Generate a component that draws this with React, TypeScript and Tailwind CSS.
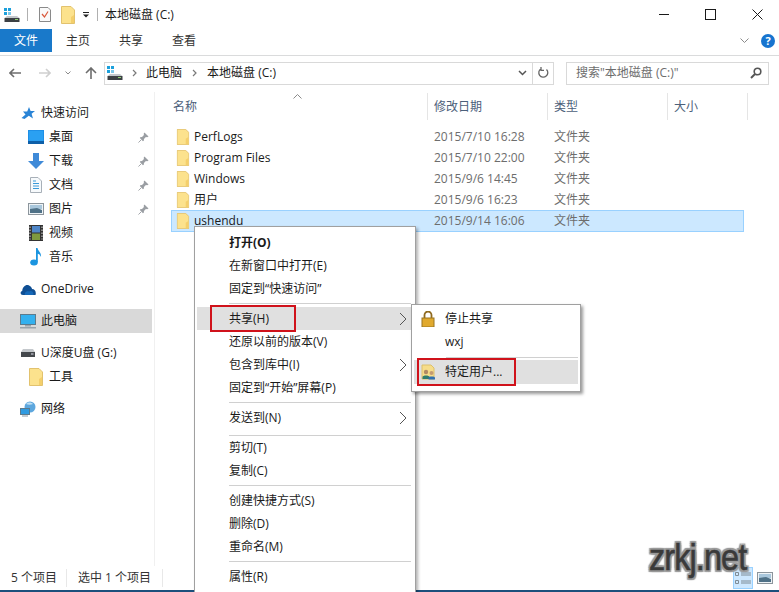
import { ReactNode } from 'react'

const FONT = `font-['Open_Sans','Noto_Sans_CJK_SC',sans-serif]`

const Folder = ({ className = '' }: { className?: string }) => (
	<svg viewBox="0 0 14 18" className={`w-[14px] h-[18px] shrink-0 ${className}`}>
		<path d="M0.5 0.5H10L13.5 4V17.5H0.5Z" fill="#fce28d" stroke="#e2c26e" />
		<path d="M10 17V11L13 9V17Z" fill="#f4cf6b" />
	</svg>
)

const Drive = () => (
	<svg viewBox="0 0 16 14" className="w-4 h-[14px] shrink-0">
		<rect x="0" y="0" width="3" height="3" fill="#1ca0dc" />
		<rect x="4" y="0" width="3" height="3" fill="#1ca0dc" />
		<rect x="0" y="4" width="3" height="3" fill="#1ca0dc" />
		<rect x="4" y="4" width="3" height="3" fill="#7cc8ea" />
		<path d="M3 8H13L15.5 10H0.5Z" fill="#c4c8cc" />
		<rect x="0.5" y="10" width="15" height="4" fill="#3c4044" />
		<rect x="11" y="11" width="3" height="1" fill="#8fd16f" />
	</svg>
)

const Pin = () => (
	<svg viewBox="0 0 12 12" className="w-[11px] h-[11px]">
		<path d="M7 0.5L11.5 5L10 5.8L8.6 5.5L6.5 7.6L6.3 9.6L5.4 10L2 6.6L2.4 5.7L4.4 5.5L6.5 3.4L6.2 2Z" fill="#9a9ea3" />
		<path d="M3.5 8.5L0.5 11.5" stroke="#9a9ea3" />
	</svg>
)

const NavIcon = ({ name }: { name: string }) => {
	if (name === 'star')
		return (
			<svg viewBox="0 0 14 14" className="w-[14px] h-[14px]">
				<path d="M8 1L9.6 5H14L10.6 7.8L12 12.5L7.8 9.8L3.5 13L0.5 12L4.5 8.5L2 5.5H6.2Z" fill="#2a84d6" />
			</svg>
		)
	if (name === 'desktop')
		return (
			<svg viewBox="0 0 16 14" className="w-4 h-[14px]">
				<rect width="16" height="14" fill="#1e8fe6" />
				<rect x="0" y="11" width="16" height="3" fill="#0d5fa8" />
				<rect x="1" y="1" width="14" height="10" fill="#2aa0f2" />
			</svg>
		)
	if (name === 'download')
		return (
			<svg viewBox="0 0 16 16" className="w-4 h-4">
				<path d="M5 0H11V8H16L8 16L0 8H5Z" fill="#3f8ad8" />
			</svg>
		)
	if (name === 'doc')
		return (
			<svg viewBox="0 0 12 16" className="w-3 h-4">
				<path d="M0.5 0.5H8L11.5 4V15.5H0.5Z" fill="#f7fafc" stroke="#a8b0b8" />
				<path d="M3 4H6M3 6.5H9M3 9H9M3 11.5H9" stroke="#3a9ad9" />
			</svg>
		)
	if (name === 'picture')
		return (
			<svg viewBox="0 0 16 12" className="w-4 h-3">
				<rect x="0.5" y="0.5" width="15" height="11" fill="#eef3f6" stroke="#8c959c" />
				<rect x="2" y="2" width="12" height="4" fill="#a9c7dc" />
				<path d="M2 6L9 5L14 7V10H2Z" fill="#4f7187" />
			</svg>
		)
	if (name === 'video')
		return (
			<svg viewBox="0 0 14 16" className="w-[14px] h-4">
				<rect width="14" height="16" fill="#333" />
				<rect x="3" y="1" width="8" height="6.5" fill="#4f86c8" />
				<rect x="3" y="8.5" width="8" height="6.5" fill="#7f9a3f" />
				<path d="M1 1.5V14.5M13 1.5V14.5" stroke="#ddd" strokeDasharray="1.5 1.5" />
			</svg>
		)
	if (name === 'music')
		return (
			<svg viewBox="0 0 12 18" className="w-3 h-[18px]">
				<ellipse cx="4" cy="14.5" rx="3.8" ry="3" fill="#1b95e0" />
				<path d="M6 14V0H7.5C8 3 11.5 4.5 11 9C10 6.5 8.8 6 7.8 5.8V14Z" fill="#1b95e0" />
			</svg>
		)
	if (name === 'cloud')
		return (
			<svg viewBox="0 0 16 11" className="w-4 h-[11px]">
				<path d="M3 11C0 11 0 7.5 2.2 7C2.5 3 6 0 9 1.5C11 2.2 12 4 12 5C15 5 16.5 8 15.5 11Z" fill="#0f4f94" />
				<path d="M5 11C4 8.5 7 6.5 9 7.5C11 6 14 7.5 13.5 11Z" fill="#1568b8" />
			</svg>
		)
	if (name === 'pc')
		return (
			<svg viewBox="0 0 16 15" className="w-4 h-[15px]">
				<rect x="0.5" y="0.5" width="15" height="10" fill="#33b0ee" stroke="#5c7a8c" />
				<rect x="5" y="11" width="6" height="1.5" fill="#9aa4ab" />
				<rect x="0" y="13" width="16" height="1.5" fill="#9aa4ab" />
			</svg>
		)
	if (name === 'usb')
		return (
			<svg viewBox="0 0 14 8" className="w-[14px] h-2">
				<path d="M2 0H12L14 3H0Z" fill="#c4c8cc" />
				<rect x="0" y="3" width="14" height="5" fill="#44484c" />
				<rect x="10" y="4.5" width="2.5" height="1" fill="#dde" />
			</svg>
		)
	if (name === 'folder') return <Folder />
	return (
		<svg viewBox="0 0 16 16" className="w-4 h-4">
			<circle cx="10" cy="6" r="5.5" fill="#5da7de" />
			<path d="M6 3C8 1 11 1 13 3C11 4 8 4 6 3Z" fill="#bfe0f5" />
			<rect x="0.5" y="7.5" width="9" height="6" fill="#2f9ae0" stroke="#5c7a8c" />
			<rect x="2" y="14.5" width="6" height="1" fill="#8a9aa6" />
		</svg>
	)
}

const NavRow = ({
	icon,
	label,
	sub,
	pin,
	active,
}: {
	icon: string
	label: string
	sub?: boolean
	pin?: boolean
	active?: boolean
}) => (
	<div
		className={`flex items-center h-6 w-[152px] text-[12px] text-[#1a1a1a] ${
			sub ? 'pl-[28px]' : 'pl-[20px]'
		} ${active ? 'bg-[#d9d9d9]' : ''}`}
	>
		<span className="flex justify-center shrink-0 w-4 mr-[5px]">
			<NavIcon name={icon} />
		</span>
		<span className="flex-1 whitespace-nowrap">{label}</span>
		{pin && (
			<span className="mr-[3px] flex">
				<Pin />
			</span>
		)}
	</div>
)

const Column = ({ label, width }: { label: string; width: string }) => (
	<div className={`${width} h-[27px] pl-[6px] flex items-center text-[12px] text-[#4c607a] border-r border-[#e5e5e5]`}>
		{label}
	</div>
)

const FileRow = ({ name, date, selected }: { name: string; date: string; selected?: boolean }) => (
	<div
		className={`flex items-center w-[573px] text-[12px] border ${
			selected ? 'h-[22px] pb-[1px] bg-[#cce8ff] border-[#99d1ff]' : 'h-[21px] border-transparent'
		}`}
	>
		<span className="w-[22px] pl-[4px] flex">
			<Folder className="scale-[0.9]" />
		</span>
		<span className="w-[240px] text-[#1a1a1a]">{name}</span>
		<span className="w-[120px] text-[#6d6d6d]">{date}</span>
		<span className="text-[#6d6d6d]">文件夹</span>
	</div>
)

const Chevron = () => (
	<svg viewBox="0 0 8 14" className="w-2 h-[14px]" fill="none" stroke="#555">
		<path d="M1 1L7 7L1 13" />
	</svg>
)

const MenuItem = ({
	children,
	arrow,
	active,
	bold,
}: {
	children: ReactNode
	arrow?: boolean
	active?: boolean
	bold?: boolean
}) => (
	<div
		className={`flex items-center justify-between h-[23px] pl-[32px] pr-[6px] text-[12px] text-[#1a1a1a] ${
			active ? 'bg-[#e0e0e0]' : ''
		} ${bold ? 'font-bold' : ''}`}
	>
		<span>{children}</span>
		{arrow && <Chevron />}
	</div>
)

const MenuSep = ({ className = 'my-[3px]' }: { className?: string }) => (
	<div className={`h-px bg-[#d0d0d0] ml-[32px] mr-[2px] ${className}`} />
)

const AddressChevron = ({ className }: { className: string }) => (
	<svg viewBox="0 0 5 8" className={`w-[5px] h-2 ${className}`} fill="none" stroke="#7a7a7a" strokeWidth="1.2">
		<path d="M1 1L4 4L1 7" />
	</svg>
)

export default function App() {
	return (
		<div className={`relative w-[779px] h-[592px] bg-white overflow-hidden flex flex-col ${FONT}`}>
			{/* title bar */}
			<div className="flex items-center h-[29px] shrink-0 pl-[4px] text-[12px] text-[#1a1a1a]">
				<Drive />
				<span className="w-px h-[13px] bg-[#b0b0b0] ml-[7px] mr-[11px]" />
				<svg viewBox="0 0 12 15" className="w-3 h-[15px] mr-[10px]">
					<path d="M0.5 0.5H9L11.5 3V14.5H0.5Z" fill="#fafafa" stroke="#8a8a8a" />
					<path d="M3 7L5.5 10L9 4.5" fill="none" stroke="#d9583b" strokeWidth="1.2" />
				</svg>
				<Folder />
				<svg viewBox="0 0 8 6" className="w-2 h-[6px] ml-[7px]">
					<rect x="1" y="0" width="6" height="1" fill="#222" />
					<path d="M1 2.5H7L4 5.5Z" fill="#222" />
				</svg>
				<span className="w-px h-[13px] bg-[#b0b0b0] ml-[7px] mr-[7px]" />
				<span>本地磁盘 (C:)</span>
				<div className="ml-auto flex items-center pr-[16px] gap-[36px]">
					<span className="w-[10px] h-px bg-[#1a1a1a]" />
					<span className="w-[11px] h-[11px] border border-[#1a1a1a]" />
					<svg viewBox="0 0 11 11" className="w-[11px] h-[11px]" stroke="#1a1a1a" fill="none">
						<path d="M0.5 0.5L10.5 10.5M10.5 0.5L0.5 10.5" />
					</svg>
				</div>
			</div>

			{/* ribbon tabs */}
			<div className="flex items-center h-[27px] shrink-0 pb-[3px] border-b-[1px] border-[#dadbdc] text-[12px] text-[#333]">
				<div className="w-[52px] h-[23px] bg-[#1979ca] text-white flex items-center justify-center">文件</div>
				<span className="ml-[14px]">主页</span>
				<span className="ml-[29px]">共享</span>
				<span className="ml-[29px]">查看</span>
				<div className="ml-auto flex items-center pr-[4px]">
					<svg viewBox="0 0 9 5" className="w-[9px] h-[5px] mr-[12px]" fill="none" stroke="#8a8a8a">
						<path d="M0.5 0.5L4.5 4.5L8.5 0.5" />
					</svg>
					<span className="w-[14px] h-[14px] rounded-full bg-[#1774cf] text-white text-[11px] font-bold flex items-center justify-center leading-none">?</span>
				</div>
			</div>

			{/* address row */}
			<div className="flex items-center h-[36px] shrink-0 pb-[2px] text-[12px]">
				<svg viewBox="0 0 12 10" className="w-3 h-[10px] ml-[9px]" fill="none" stroke="#6d6d6d" strokeWidth="1.6">
					<path d="M12 5H1M5 1L1 5L5 9" />
				</svg>
				<svg viewBox="0 0 12 10" className="w-3 h-[10px] ml-[18px]" fill="none" stroke="#cfcfcf" strokeWidth="1.6">
					<path d="M0 5H11M7 1L11 5L7 9" />
				</svg>
				<svg viewBox="0 0 6 4" className="w-[6px] h-1 ml-[14px]" fill="none" stroke="#8a8a8a">
					<path d="M0.5 0.5L3 3L5.5 0.5" />
				</svg>
				<svg viewBox="0 0 12 12" className="w-3 h-3 ml-[14px]" fill="none" stroke="#6d6d6d" strokeWidth="1.6">
					<path d="M6 12V1M1 6L6 1L11 6" />
				</svg>
				<div className="flex items-center w-[450px] h-[23px] ml-[7px] border border-[#d9d9d9] pl-[2px]">
					<Drive />
					<AddressChevron className="mx-[9px]" />
					<span className="text-[#1a1a1a]">此电脑</span>
					<AddressChevron className="mx-[10px]" />
					<span className="text-[#1a1a1a]">本地磁盘 (C:)</span>
					<svg viewBox="0 0 9 6" className="w-[9px] h-[6px] ml-auto" fill="none" stroke="#555" strokeWidth="1.5">
						<path d="M1 1L4.5 4.5L8 1" />
					</svg>
					<span className="w-px h-[21px] bg-[#d9d9d9] ml-[5px]" />
					<svg viewBox="0 0 12 12" className="w-3 h-3 mx-[4px]" fill="none" stroke="#666" strokeWidth="1.3">
						<path d="M9.5 2.5A4.5 4.5 0 1 1 4 1.8M4 0V3.4H7" />
					</svg>
				</div>
				<div className="flex items-center justify-between w-[203px] h-[23px] ml-[12px] border border-[#d9d9d9] pl-[9px] pr-[6px] text-[#6d6d6d]">
					<span>搜索"本地磁盘 (C:)"</span>
					<svg viewBox="0 0 12 12" className="w-3 h-3" fill="none" stroke="#555" strokeWidth="1.6">
						<circle cx="7.5" cy="4.5" r="3.3" />
						<path d="M5 7L1 11" strokeWidth="2" />
					</svg>
				</div>
			</div>

			{/* body */}
			<div className="flex flex-1 min-h-0">
				<div className="w-[155px] shrink-0 border-r border-[#f0f0f0] pt-[9px]">
					<NavRow icon="star" label="快速访问" />
					<NavRow icon="desktop" label="桌面" sub pin />
					<NavRow icon="download" label="下载" sub pin />
					<NavRow icon="doc" label="文档" sub pin />
					<NavRow icon="picture" label="图片" sub pin />
					<NavRow icon="video" label="视频" sub />
					<NavRow icon="music" label="音乐" sub />
					<div className="h-2" />
					<NavRow icon="cloud" label="OneDrive" />
					<div className="h-2" />
					<NavRow icon="pc" label="此电脑" active />
					<div className="h-2" />
					<NavRow icon="usb" label="U深度U盘 (G:)" />
					<NavRow icon="folder" label="工具" sub />
					<div className="h-2" />
					<NavRow icon="network" label="网络" />
				</div>
				<div className="flex-1 pl-[12px] pt-[1px]">
					<div className="relative flex">
						<Column label="名称" width="w-[261px]" />
						<Column label="修改日期" width="w-[120px]" />
						<Column label="类型" width="w-[120px]" />
						<Column label="大小" width="w-[80px]" />
						<svg viewBox="0 0 9 5" className="absolute left-[126px] top-[1px] w-[9px] h-[5px]" fill="none" stroke="#8a8a8a">
							<path d="M0.5 4.5L4.5 0.5L8.5 4.5" />
						</svg>
					</div>
					<div className="flex flex-col pt-[6px] ml-[4px]">
						<FileRow name="PerfLogs" date="2015/7/10 16:28" />
						<FileRow name="Program Files" date="2015/7/10 22:00" />
						<FileRow name="Windows" date="2015/9/6 14:45" />
						<FileRow name="用户" date="2015/9/6 16:23" />
						<FileRow name="ushendu" date="2015/9/14 16:06" selected />
					</div>
				</div>
			</div>

			{/* status bar */}
			<div className="flex items-center h-[24px] shrink-0 text-[12px] text-[#333] relative">
				<span className="pl-[11px] w-[67px] border-r border-[#e8e8e8]">5 个项目</span>
				<span className="pl-[11px] w-[96px] border-r border-[#e8e8e8]">选中 1 个项目</span>
				<div className="ml-auto flex items-center pr-[6px]">
					<span className="w-[20px] h-[22px] bg-[#cde8ff] border border-[#99d1ff] flex items-center justify-center">
						<svg viewBox="0 0 16 14" className="w-4 h-[14px]" fill="none" stroke="#7f8c96">
							<path d="M0.5 1.5H3.5V4.5H0.5ZM0.5 9.5H3.5V12.5H0.5ZM6 2H16M6 4H16M6 10H16M6 12H16" />
						</svg>
					</span>
					<span className="ml-[4px] flex">
						<NavIcon name="picture" />
					</span>
				</div>
			</div>
			<div className="h-[2px] shrink-0 bg-[#1c4f7c]" />

			{/* context menu */}
			<div className="absolute left-[194px] top-[226px] w-[222px] h-[370px] bg-white border border-[#a0a0a0] shadow-[2px_2px_3px_rgba(0,0,0,0.3)] p-[2px] pt-[4px]">
				<MenuItem bold>打开(O)</MenuItem>
				<MenuItem>在新窗口中打开(E)</MenuItem>
				<MenuItem>固定到“快速访问”</MenuItem>
				<MenuSep />
				<MenuItem arrow active>共享(H)</MenuItem>
				<MenuItem>还原以前的版本(V)</MenuItem>
				<MenuItem arrow>包含到库中(I)</MenuItem>
				<MenuItem>固定到“开始”屏幕(P)</MenuItem>
				<MenuSep />
				<MenuItem arrow>发送到(N)</MenuItem>
				<MenuSep className="mt-[6px] mb-[0px]" />
				<MenuItem>剪切(T)</MenuItem>
				<MenuItem>复制(C)</MenuItem>
				<MenuSep />
				<MenuItem>创建快捷方式(S)</MenuItem>
				<MenuItem>删除(D)</MenuItem>
				<MenuItem>重命名(M)</MenuItem>
				<MenuSep />
				<MenuItem>属性(R)</MenuItem>
			</div>
			<div className="absolute left-[210px] top-[305px] w-[86px] h-[27px] border-2 border-[#d0121b]" />

			{/* share submenu */}
			<div className="absolute left-[411px] top-[304px] w-[170px] h-[88px] bg-white border border-[#a0a0a0] shadow-[2px_2px_3px_rgba(0,0,0,0.4)] p-[2px]">
				<div className="flex items-center h-[23px] text-[12px] text-[#1a1a1a] pl-[7px]">
					<svg viewBox="0 0 14 16" className="w-[14px] h-4 mr-[10px]">
						<path d="M3.5 7V4A3.5 3.5 0 0 1 10.5 4V7" fill="none" stroke="#8f6a20" strokeWidth="1.8" />
						<rect x="1" y="7" width="12" height="9" fill="#e0a92e" stroke="#9a7420" />
					</svg>
					停止共享
				</div>
				<div className="flex items-center h-[23px] text-[12px] text-[#1a1a1a] pl-[31px]">wxj</div>
				<div className="h-px bg-[#d0d0d0] ml-[32px] mt-[4px] mb-[2px]" />
				<div className="flex items-center h-[24px] bg-[#e0e0e0] text-[12px] text-[#1a1a1a] pl-[7px]">
					<svg viewBox="0 0 15 16" className="w-[15px] h-4 mr-[9px]">
						<path d="M1 1H10L13 4V15H1Z" fill="#f6dd8a" stroke="#dcc06a" />
						<circle cx="5" cy="8" r="2.2" fill="#b08a64" />
						<path d="M1.5 15V13C1.5 11 8.5 11 8.5 13V15Z" fill="#2f7d6c" />
						<circle cx="10.5" cy="9" r="2" fill="#c29a72" />
						<path d="M7.5 15.5V13.8C7.5 12 14 12 14 13.8V15.5Z" fill="#2f6fb0" />
					</svg>
					特定用户...
				</div>
			</div>
			<div className="absolute left-[417px] top-[358px] w-[99px] h-[28px] border-2 border-[#d0121b]" />

			{/* watermark */}
			<div className="absolute left-[649px] top-[536px] origin-left scale-x-[0.9] font-['Liberation_Sans',sans-serif] text-[36px] leading-[44px] tracking-[-1px] text-[#3a3a3a] [-webkit-text-stroke:0.6px_#3a3a3a] [text-shadow:2px_0_1px_#999,-2px_0_1px_#999,0_2px_1px_#999,0_-2px_1px_#999,2px_2px_1px_#999,-2px_-2px_1px_#999,2px_-2px_1px_#999,-2px_2px_1px_#999]">
				zrkj.net
			</div>
		</div>
	)
}
